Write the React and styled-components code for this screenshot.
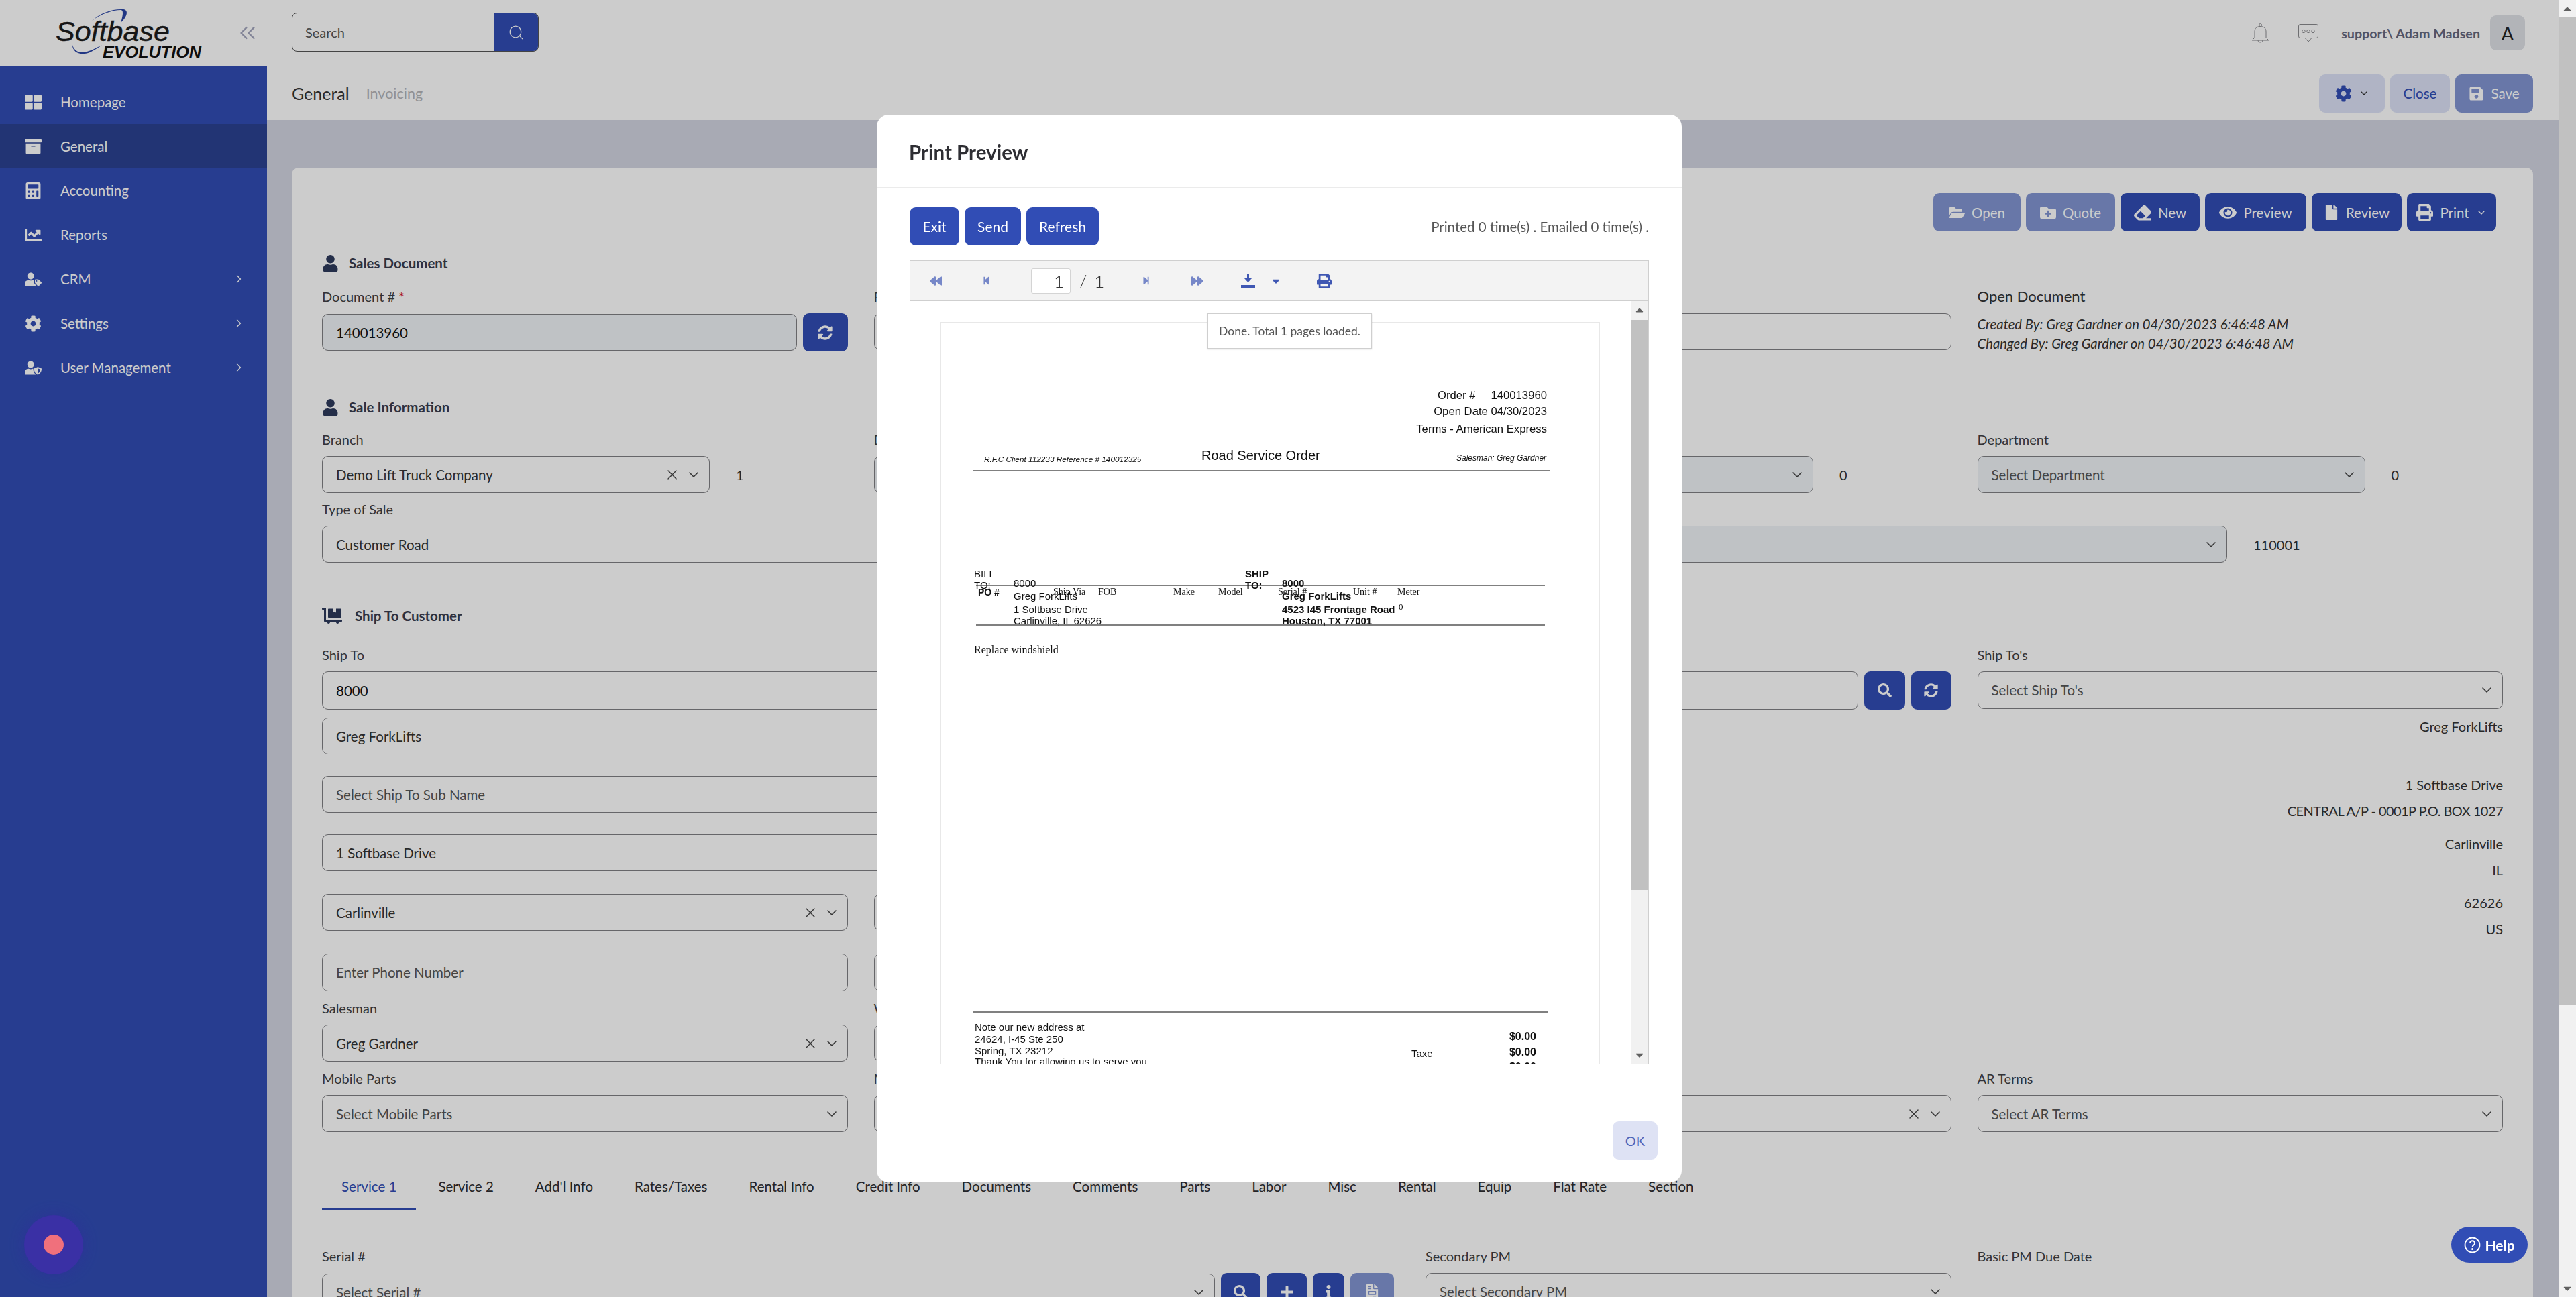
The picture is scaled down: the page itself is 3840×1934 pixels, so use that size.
import React from "react";
import styled, { createGlobalStyle } from "styled-components";
import { ChevronDown, ChevronRight, ChevronsLeft, Search, X } from "lucide-react";
import {
  FaArchive, FaBackward, FaCalculator, FaCaretDown, FaChartLine, FaCog, FaDollyFlatbed, FaEraser, FaEye, FaFile,
  FaFileInvoice, FaFolderOpen, FaFolderPlus, FaForward, FaInfo, FaPlus, FaPrint, FaSave, FaSearch, FaStepBackward,
  FaStepForward, FaSyncAlt, FaThLarge, FaUser, FaUserShield, FaUserTag, FaCaretUp,
} from "react-icons/fa";

const Global = createGlobalStyle`
  body {
    margin: 0;
    overflow: hidden;
    background: #d3d5e2;
    font-family: Lato, "Noto Sans", sans-serif;
    font-size: 20px;
    color: #2f2f33;
  }
`;

const Shell = styled.div`
  display: flex;
  height: 100vh;
  overflow: hidden;
`;

const Main = styled.div`
  flex: 1;
  display: flex;
  min-width: 0;
`;

const Sidebar = styled.aside`
  width: 398px;
  flex: none;
  background: #314db5;
`;

const LogoBar = styled.div`
  height: 98px;
  background: #fff;
  display: flex;
  align-items: center;
  justify-content: space-between;
  padding: 0 10px 0 78px;
`;

const NavList = styled.nav`
  padding-top: 21px;
`;

const NavItem = styled.div`
  height: 66px;
  display: flex;
  align-items: center;
  padding: 0 32px 0 37px;
  color: #fff;
  font-size: 20.5px;
  background: ${(p) => (p.$active ? "#2b4192" : "transparent")};
`;

const NavIcon = styled.span`
  width: 53px;
  display: flex;
  font-size: 25px;
`;

const NavCaret = styled.span`
  margin-left: auto;
  display: flex;
`;

const Content = styled.div`
  flex: 1;
  min-width: 0;
`;

const TopBar = styled.header`
  height: 98px;
  box-sizing: content-box;
  background: #fff;
  border-bottom: 1px solid #e6e6e6;
  display: flex;
  align-items: center;
  padding: 0 50px 0 37px;
`;

const SearchBox = styled.div`
  width: 368px;
  height: 58px;
  display: flex;
  border: 1px solid #555;
  border-radius: 8px;
  overflow: hidden;
  box-sizing: border-box;
  margin-top: -2px;
`;

const SearchText = styled.div`
  flex: 1;
  display: flex;
  align-items: center;
  padding-left: 19px;
  color: #555;
  font-size: 20px;
`;

const SearchButton = styled.div`
  width: 66px;
  background: #314db5;
  color: #fff;
  display: flex;
  align-items: center;
  justify-content: center;
`;

const TopRight = styled.div`
  margin-left: auto;
  display: flex;
  align-items: center;
  gap: 43px;
  color: #8a8a8e;
`;

const UserBlock = styled.div`
  display: flex;
  align-items: center;
  gap: 15px;
  margin-left: -9px;
`;

const UserName = styled.span`
  font-weight: 700;
  font-size: 19.7px;
  color: #65687f;
`;

const Avatar = styled.div`
  width: 52px;
  height: 52px;
  border-radius: 9px;
  background: #dfe1e6;
  display: flex;
  align-items: center;
  justify-content: center;
  font-size: 27px;
  color: #222;
`;

const SubBar = styled.div`
  height: 80px;
  background: #fff;
  display: flex;
  align-items: center;
  padding: 0 38px 0 37px;
`;

const Crumb = styled.span`
  font-size: 25px;
  color: #333;
`;

const CrumbDim = styled.span`
  font-size: 21.5px;
  color: #b4b4b8;
  margin-left: 25px;
`;

const SubActions = styled.div`
  margin-left: auto;
  display: flex;
  gap: 8px;
`;

const Btn = styled.button`
  height: 57px;
  width: ${(p) => p.$w}px;
  border: 0;
  padding: 0;
  border-radius: 9px;
  display: inline-flex;
  align-items: center;
  justify-content: center;
  gap: 10px;
  flex: none;
  font: inherit;
  font-size: 20.5px;
  color: ${(p) => (p.$soft ? "#314db5" : "#fff")};
  background: ${(p) => (p.$soft ? "#dce2f7" : p.$off ? "#8295d3" : "#314db5")};
`;

const Card = styled.main`
  margin: 71px 38px 0 37px;
  padding: 38px 45px 0;
  background: #fff;
  border-radius: 10px;
`;

const ActionBar = styled.div`
  display: flex;
  justify-content: flex-end;
  gap: 8px;
  padding-right: 10px;
`;

const SectionHead = styled.h3`
  margin: ${(p) => p.$top}px 0 0;
  height: 30px;
  display: flex;
  align-items: center;
  gap: ${(p) => p.$gap || 15}px;
  font-size: 20.5px;
  font-weight: 700;
  color: #3a3d4e;
  svg { color: #2d3a5c; font-size: 25px; }
`;

const Row = styled.div`
  display: grid;
  grid-template-columns: repeat(${(p) => p.$cols || 4}, minmax(0, 1fr));
  column-gap: 39px;
  margin-top: ${(p) => p.$top || 0}px;
`;

const Cell = styled.div`
  grid-column: span ${(p) => p.$span || 1};
  min-width: 0;
`;

const Label = styled.div`
  height: 28px;
  line-height: 28px;
  margin-bottom: 11px;
  font-size: 20px;
  color: #3f3f44;
  white-space: nowrap;
  b { color: #d3162c; font-weight: 400; }
`;

const Control = styled.div`
  display: flex;
  align-items: center;
  gap: ${(p) => p.$gap || 9}px;
`;

const Box = styled.div`
  height: ${(p) => p.$h || 55}px;
  box-sizing: border-box;
  flex: ${(p) => (p.$w ? "none" : 1)};
  width: ${(p) => (p.$w ? `${p.$w}px` : "auto")};
  min-width: 0;
  display: flex;
  align-items: center;
  padding: 0 11px 0 20px;
  border: 1px solid #808084;
  border-radius: 9px;
  background: ${(p) => (p.$off ? "#eff3f7" : "#fff")};
  color: ${(p) => (p.$dark ? "#111" : "#333")};
  font-size: 20.5px;
  white-space: nowrap;
`;

const Hint = styled.span`
  color: #555;
`;

const BoxIcons = styled.span`
  margin-left: auto;
  display: flex;
  align-items: center;
  gap: 8px;
  color: #444;
`;

const Code = styled.span`
  margin-left: ${(p) => (p.$flush ? 0 : 30)}px;
  font-size: 20px;
  color: #333;
`;

const SquareBtn = styled(Btn)`
  font-size: 21px;
`;

const DocInfo = styled.div`
  font-size: 20.3px;
  color: #333;
`;

const DocTitle = styled.div`
  font-size: 22px;
  height: 28px;
  line-height: 28px;
  margin-bottom: 13px;
`;

const DocLine = styled.div`
  font-style: italic;
  height: 29px;
  line-height: 29px;
`;

const ReadLine = styled.div`
  height: 26px;
  line-height: 26px;
  margin-top: ${(p) => p.$top || 0}px;
  text-align: right;
  font-size: 20px;
  letter-spacing: ${(p) => (p.$tight ? "-0.55px" : "0")};
  color: #333;
  white-space: nowrap;
`;

const Stack = styled.div`
  grid-column: span ${(p) => p.$span || 1};
  min-width: 0;
`;

const Tabs = styled.div`
  display: flex;
  gap: 4px;
  margin-top: 52px;
  height: 65px;
  box-sizing: border-box;
  border-bottom: 1px solid #d3d5e2;
`;

const Tab = styled.div`
  height: 65px;
  box-sizing: border-box;
  display: flex;
  align-items: center;
  padding: 0 29px 3px;
  font-size: 20.5px;
  white-space: nowrap;
  color: ${(p) => (p.$on ? "#314db5" : "#2c2c30")};
  border-bottom: 4px solid ${(p) => (p.$on ? "#314db5" : "transparent")};
`;

const PageScroll = styled.div`
  width: 26px;
  flex: none;
  background: #f1f1f1;
  display: flex;
  flex-direction: column;
`;

const ScrollEnd = styled.div`
  height: 26px;
  flex: none;
  display: flex;
  align-items: center;
  justify-content: center;
  color: #606060;
  font-size: 18px;
`;

const ScrollThumb = styled.div`
  height: ${(p) => p.$h}px;
  margin: ${(p) => p.$top || 0}px 0 auto;
  background: #c1c1c1;
`;

const Overlay = styled.div`
  position: fixed;
  inset: 0 26px 0 0;
  background: rgba(0, 0, 0, 0.2);
  display: flex;
  justify-content: center;
  align-items: flex-start;
  padding-top: 171px;
`;

const Modal = styled.section`
  width: 1200px;
  height: 1592px;
  background: #fff;
  border-radius: 18px;
  display: flex;
  flex-direction: column;
  overflow: hidden;
`;

const ModalHead = styled.div`
  height: 109px;
  box-sizing: border-box;
  flex: none;
  border-bottom: 1px solid #ebebeb;
  display: flex;
  align-items: center;
  padding: 3px 48px 0;
  font-size: 29.5px;
  font-weight: 700;
  color: #2e2e33;
`;

const ModalBody = styled.div`
  flex: 1;
  min-height: 0;
  padding: 29px 49px 0;
`;

const ModalActions = styled.div`
  display: flex;
  align-items: center;
  gap: 8px;
  height: 57px;
  margin-bottom: 22px;
`;

const ModalBtn = styled(Btn)`
  font-size: 21px;
`;

const PrintCount = styled.span`
  margin-left: auto;
  font-size: 20.5px;
  color: #555;
`;

const Viewer = styled.div`
  height: 1199px;
  box-sizing: border-box;
  border: 1px solid #cfcfcf;
  display: flex;
  flex-direction: column;
`;

const ViewerBar = styled.div`
  height: 60px;
  flex: none;
  box-sizing: border-box;
  background: #f3f3f3;
  border-bottom: 1px solid #cfcfcf;
  display: flex;
  align-items: center;
  padding-left: 29px;
  color: #333;
`;

const ToolIcon = styled.span`
  display: flex;
  margin-left: ${(p) => p.$ml || 0}px;
  font-size: ${(p) => p.$s || 18}px;
  color: ${(p) => (p.$dim ? "#7687c8" : "#3f57b3")};
`;

const PageInput = styled.div`
  width: 59px;
  height: 38px;
  box-sizing: border-box;
  margin-left: 60px;
  padding-right: 9px;
  background: #fff;
  border: 1px solid #d4d4d4;
  border-radius: 3px;
  display: flex;
  align-items: center;
  justify-content: flex-end;
  font-size: 26px;
  font-weight: 300;
`;

const PageTotal = styled.span`
  margin-left: 13px;
  font-size: 26px;
  font-weight: 300;
  word-spacing: 4px;
`;

const ViewerBody = styled.div`
  flex: 1;
  min-height: 0;
  display: flex;
  position: relative;
`;

const ReportArea = styled.div`
  flex: 1;
  overflow: hidden;
  padding: 31px 0 0 44px;
`;

const ViewerScroll = styled.div`
  width: 24px;
  margin-right: 1px;
  background: #f1f1f1;
  display: flex;
  flex-direction: column;
  justify-content: space-between;
`;

const Toast = styled.div`
  position: absolute;
  left: 443px;
  top: 18px;
  width: 245px;
  height: 53px;
  box-sizing: border-box;
  background: #fff;
  border: 1px solid #cfcfcf;
  box-shadow: 0 1px 2px rgba(0, 0, 0, 0.15);
  display: flex;
  align-items: center;
  justify-content: center;
  font-size: 17.5px;
  color: #555;
  white-space: nowrap;
`;

const ReportPage = styled.div`
  width: 984px;
  height: 1400px;
  box-sizing: border-box;
  border: 1px solid #e8e8e8;
  position: relative;
`;

const RText = styled.span`
  position: absolute;
  ${(p) => (p.$right !== undefined ? `right: ${p.$right}px;` : `left: ${p.$x}px;`)}
  top: ${(p) => p.$y}px;
  transform: translateY(-50%);
  white-space: nowrap;
  color: #111;
  font-family: ${(p) => (p.$serif ? '"Liberation Serif", serif' : '"Liberation Sans", Arial, sans-serif')};
  font-size: ${(p) => p.$s || 15}px;
  font-weight: ${(p) => (p.$b ? 700 : 400)};
  font-style: ${(p) => (p.$i ? "italic" : "normal")};
`;

const RLine = styled.div`
  position: absolute;
  left: ${(p) => p.$x}px;
  top: ${(p) => p.$y}px;
  width: ${(p) => p.$w}px;
  height: ${(p) => p.$t || 2}px;
  background: #808080;
`;

const ModalFoot = styled.div`
  height: 126px;
  flex: none;
  box-sizing: border-box;
  border-top: 1px solid #ebebeb;
  display: flex;
  justify-content: flex-end;
  padding: 34px 36px 0 0;
`;

const OkBtn = styled(Btn)`
  color: #4f63b8;
  background: #dee2f4;
  font-size: 20px;
`;

const HelpBtn = styled.div`
  position: fixed;
  left: 3654px;
  top: 1829px;
  width: 114px;
  height: 54px;
  border-radius: 27px;
  background: #314db5;
  color: #fff;
  display: flex;
  align-items: center;
  justify-content: center;
  gap: 6px;
  font-weight: 700;
  font-size: 21px;
`;

const Recorder = styled.div`
  position: fixed;
  left: 36px;
  top: 1812px;
  width: 88px;
  height: 88px;
  border-radius: 50%;
  background: #3a30a5;
  box-shadow: 0 0 24px rgba(50, 40, 160, 0.5);
  display: flex;
  align-items: center;
  justify-content: center;
  &::after {
    content: "";
    width: 30px;
    height: 30px;
    border-radius: 50%;
    background: #f0707c;
  }
`;

const Logo = () => (
  <svg width="224" height="80" viewBox="0 0 224 80">
    <path d="M59 22C72 12 90 6 102 6C106 6 106 12 102 25C112 16 114 6 106 5C90 4 72 10 59 22Z" fill="#2a45a5" />
    <path d="M30 58C30 70 44 75 58 68C64 65 70 61 74 58C64 63 54 69 44 69C36 69 32 64 30 58Z" fill="#2a45a5" />
    <text x="5" y="52" fontFamily="Liberation Sans" fontStyle="italic" fontSize="41" textLength="170" lengthAdjust="spacingAndGlyphs" fill="#1c1c1c" stroke="#1c1c1c" strokeWidth=".4">Softbase</text>
    <text x="75" y="77" fontFamily="Liberation Sans" fontStyle="italic" fontWeight="700" fontSize="24" textLength="147" lengthAdjust="spacingAndGlyphs" fill="#111">EVOLUTION</text>
  </svg>
);

const BellIcon = () => (
  <svg width="27" height="29" viewBox="0 0 27 29" fill="none" stroke="currentColor" strokeWidth="1">
    <circle cx="13.500" cy="2.500" r="2" />
    <path d="M5 21V12C5 7 8.500 4.500 13.500 4.500S22 7 22 12V21L26 25H1Z" />
    <path d="M10 25c0 4 7 4 7 0" />
  </svg>
);

const ChatIcon = () => (
  <svg width="30" height="27" viewBox="0 0 30 27" fill="none" stroke="currentColor" strokeWidth="1">
    <path d="M3 .5H27A2.500 2.500 0 0 1 29.500 3V18A2.500 2.500 0 0 1 27 20.500H20L15 26L10 20.500H3A2.500 2.500 0 0 1 .5 18V3A2.500 2.500 0 0 1 3 .5Z" />
    <circle cx="8" cy="10.500" r="2.200" />
    <circle cx="15" cy="10.500" r="2.200" />
    <circle cx="22" cy="10.500" r="2.200" />
  </svg>
);

const Chev = () => <ChevronDown size={24} strokeWidth={1.6} />;
const Clear = () => <X size={24} strokeWidth={1.4} />;

const Select = ({ value, hint, clear, w, off, h }) => (
  <Box $w={w} $off={off} $h={h}>
    {value ? value : <Hint>{hint}</Hint>}
    <BoxIcons>
      {clear && <Clear />}
      <Chev />
    </BoxIcons>
  </Box>
);

const navItems = [
  ["Homepage", FaThLarge],
  ["General", FaArchive, true],
  ["Accounting", FaCalculator],
  ["Reports", FaChartLine],
  ["CRM", FaUserTag, false, true],
  ["Settings", FaCog, false, true],
  ["User Management", FaUserShield, false, true],
];

const tabs = ["Service 1", "Service 2", "Add'l Info", "Rates/Taxes", "Rental Info", "Credit Info", "Documents", "Comments", "Parts", "Labor", "Misc", "Rental", "Equip", "Flat Rate", "Section"];

const report = [
  { x: 741, y: 109, s: 16.7, t: "Order #" },
  { right: 78, y: 109, s: 16.7, t: "140013960" },
  { right: 78, y: 133, s: 16.7, t: "Open Date 04/30/2023" },
  { right: 78, y: 159, s: 16.7, t: "Terms - American Express" },
  { x: 65, y: 204, s: 11.8, i: true, t: "R.F.C Client 112233  Reference # 140012325" },
  { x: 389, y: 198, s: 20, t: "Road Service Order" },
  { x: 769, y: 202, s: 12, i: true, t: "Salesman: Greg Gardner" },
  { x: 50, y: 374, t: "BILL" },
  { x: 50, y: 391, t: "TO:" },
  { x: 109, y: 388, t: "8000" },
  { x: 109, y: 407, t: "Greg ForkLifts" },
  { x: 109, y: 427, t: "1 Softbase Drive" },
  { x: 109, y: 444, t: "Carlinville, IL 62626" },
  { x: 454, y: 374, b: true, t: "SHIP" },
  { x: 454, y: 391, b: true, t: "TO:" },
  { x: 509, y: 388, b: true, t: "8000" },
  { x: 509, y: 407, b: true, t: "Greg ForkLifts" },
  { x: 509, y: 427, b: true, t: "4523 I45 Frontage Road" },
  { x: 509, y: 444, b: true, t: "Houston, TX 77001" },
  { x: 56, y: 402, s: 14, b: true, t: "PO #" },
  { x: 168, y: 402, s: 14, serif: true, t: "Ship Via" },
  { x: 235, y: 402, s: 14, serif: true, t: "FOB" },
  { x: 347, y: 402, s: 14, serif: true, t: "Make" },
  { x: 414, y: 402, s: 14, serif: true, t: "Model" },
  { x: 503, y: 402, s: 14, serif: true, t: "Serial #" },
  { x: 615, y: 402, s: 14, serif: true, t: "Unit #" },
  { x: 681, y: 402, s: 14, serif: true, t: "Meter" },
  { x: 683, y: 424, s: 13, serif: true, t: "0" },
  { x: 50, y: 488, s: 16, serif: true, t: "Replace windshield" },
  { x: 51, y: 1050, t: "Note our new address at" },
  { x: 51, y: 1068, t: "24624, I-45 Ste 250" },
  { x: 51, y: 1085, t: "Spring, TX 23212" },
  { x: 51, y: 1101, t: "Thank You for allowing us to serve you." },
  { x: 702, y: 1089, t: "Taxe" },
  { right: 94, y: 1065, b: true, s: 16, t: "$0.00" },
  { right: 94, y: 1088, b: true, s: 16, t: "$0.00" },
  { right: 94, y: 1110, b: true, s: 16, t: "$0.00" },
];

const DownloadIcon = () => (
  <svg width="21" height="21" viewBox="0 0 21 21" fill="currentColor">
    <rect x="9" y="0" width="3" height="7" />
    <path d="M4.5 6.5h12L10.500 13Z" />
    <rect x="0" y="17" width="21" height="4" />
  </svg>
);

const HelpIcon = () => (
  <svg width="25" height="25" viewBox="0 0 25 25" fill="none" stroke="currentColor" strokeWidth="1.8">
    <circle cx="12.500" cy="12.500" r="11" />
    <path d="M9 10c0-5 7-5 7 0 0 2.500-3.500 3-3.500 5.500" />
    <circle cx="12.500" cy="18.500" r=".6" />
  </svg>
);

export default function App() {
  return (
    <Shell>
      <Global />
      <Main>
        <Sidebar>
          <LogoBar>
            <Logo />
            <ChevronsLeft size={38} strokeWidth={1.5} color="#a3a6bd" />
          </LogoBar>
          <NavList>
            {navItems.map(([name, Icon, active, more]) => (
              <NavItem key={name} $active={active}>
                <NavIcon><Icon /></NavIcon>
                {name}
                {more && <NavCaret><ChevronRight size={20} strokeWidth={1.6} /></NavCaret>}
              </NavItem>
            ))}
          </NavList>
        </Sidebar>
        <Content>
          <TopBar>
            <SearchBox>
              <SearchText>Search</SearchText>
              <SearchButton><Search size={25} strokeWidth={1.2} /></SearchButton>
            </SearchBox>
            <TopRight>
              <BellIcon />
              <ChatIcon />
              <UserBlock>
                <UserName>support\ Adam Madsen</UserName>
                <Avatar>A</Avatar>
              </UserBlock>
            </TopRight>
          </TopBar>
          <SubBar>
            <Crumb>General</Crumb>
            <CrumbDim>Invoicing</CrumbDim>
            <SubActions>
              <Btn $w={98} $soft><FaCog size={25} /><ChevronDown size={16} color="#333" /></Btn>
              <Btn $w={89} $soft>Close</Btn>
              <Btn $w={116} $off><FaSave size={23} />Save</Btn>
            </SubActions>
          </SubBar>
          <Card>
            <ActionBar>
              <Btn $w={130} $off><FaFolderOpen size={24} />Open</Btn>
              <Btn $w={133} $off><FaFolderPlus size={24} />Quote</Btn>
              <Btn $w={118}><FaEraser size={26} />New</Btn>
              <Btn $w={151}><FaEye size={26} />Preview</Btn>
              <Btn $w={134}><FaFile size={23} />Review</Btn>
              <Btn $w={133}><FaPrint size={25} />Print<ChevronDown size={16} /></Btn>
            </ActionBar>

            <SectionHead $top={32}><FaUser />Sales Document</SectionHead>
            <Row $top={21}>
              <Cell>
                <Label>Document # <b>*</b></Label>
                <Control>
                  <Box $off $dark>140013960</Box>
                  <SquareBtn $w={67}><FaSyncAlt size={22} /></SquareBtn>
                </Control>
              </Cell>
              <Cell>
                <Label>PO #</Label>
                <Box />
              </Cell>
              <Cell>
                <Label>Reference</Label>
                <Box />
              </Cell>
              <Cell>
                <DocInfo>
                  <DocTitle>Open Document</DocTitle>
                  <DocLine>Created By: Greg Gardner on 04/30/2023 6:46:48 AM</DocLine>
                  <DocLine>Changed By: Greg Gardner on 04/30/2023 6:46:48 AM</DocLine>
                </DocInfo>
              </Cell>
            </Row>

            <SectionHead $top={65}><FaUser />Sale Information</SectionHead>
            <Row $top={19}>
              <Cell>
                <Label>Branch</Label>
                <Control><Select value="Demo Lift Truck Company" clear w={578} /><Code>1</Code></Control>
              </Cell>
              <Cell>
                <Label>Division</Label>
                <Control><Select w={578} off /><Code>0</Code></Control>
              </Cell>
              <Cell>
                <Label>Location</Label>
                <Control><Select w={578} off /><Code>0</Code></Control>
              </Cell>
              <Cell>
                <Label>Department</Label>
                <Control><Select hint="Select Department" w={578} off /><Code>0</Code></Control>
              </Cell>
            </Row>
            <Row $top={10}>
              <Cell $span={4}>
                <Label>Type of Sale</Label>
                <Control $gap={39}>
                  <Box $w={1400}>Customer Road</Box>
                  <Select w={1401} off />
                  <Code $flush>110001</Code>
                </Control>
              </Cell>
            </Row>

            <SectionHead $top={64} $gap={19}><FaDollyFlatbed size={30} />Ship To Customer</SectionHead>
            <Row $top={29}>
              <Cell $span={3}>
                <Label>Ship To</Label>
                <Control>
                  <Box $h={57} $dark>8000</Box>
                  <SquareBtn $w={61}><FaSearch size={21} /></SquareBtn>
                  <SquareBtn $w={60}><FaSyncAlt size={21} /></SquareBtn>
                </Control>
              </Cell>
              <Cell>
                <Label>Ship To's</Label>
                <Select hint="Select Ship To's" h={56} />
              </Cell>
            </Row>
            <Row $top={12}>
              <Stack $span={3}>
                <Row $cols={3}>
                  <Cell $span={2}><Box>Greg ForkLifts</Box></Cell>
                </Row>
                <Row $cols={3} $top={32}>
                  <Cell $span={2}><Box><Hint>Select Ship To Sub Name</Hint></Box></Cell>
                </Row>
                <Row $cols={3} $top={32}>
                  <Cell $span={2}><Box>1 Softbase Drive</Box></Cell>
                </Row>
                <Row $cols={3} $top={34}>
                  <Cell><Select value="Carlinville" clear /></Cell>
                  <Cell><Select /></Cell>
                </Row>
                <Row $cols={3} $top={34}>
                  <Cell><Box $h={56}><Hint>Enter Phone Number</Hint></Box></Cell>
                  <Cell><Box $h={56} /></Cell>
                </Row>
                <Row $cols={3} $top={11}>
                  <Cell>
                    <Label>Salesman</Label>
                    <Select value="Greg Gardner" clear />
                  </Cell>
                  <Cell>
                    <Label>Warehouse</Label>
                    <Select />
                  </Cell>
                </Row>
              </Stack>
              <Stack>
                <ReadLine>Greg ForkLifts</ReadLine>
                <ReadLine $top={61}>1 Softbase Drive</ReadLine>
                <ReadLine $top={13} $tight>CENTRAL A/P - 0001P P.O. BOX 1027</ReadLine>
                <ReadLine $top={23}>Carlinville</ReadLine>
                <ReadLine $top={13}>IL</ReadLine>
                <ReadLine $top={23}>62626</ReadLine>
                <ReadLine $top={13}>US</ReadLine>
              </Stack>
            </Row>
            <Row $top={11}>
              <Cell>
                <Label>Mobile Parts</Label>
                <Select hint="Select Mobile Parts" />
              </Cell>
              <Cell>
                <Label>Mechanic</Label>
                <Select />
              </Cell>
              <Cell>
                <Label>Terms</Label>
                <Select clear />
              </Cell>
              <Cell>
                <Label>AR Terms</Label>
                <Select hint="Select AR Terms" />
              </Cell>
            </Row>

            <Tabs>
              {tabs.map((t, i) => (
                <Tab key={t} $on={i === 0}>{t}</Tab>
              ))}
            </Tabs>

            <Row $top={54}>
              <Cell $span={2}>
                <Label>Serial #</Label>
                <Control>
                  <Box $w={1331}>
                    <Hint>Select Serial #</Hint>
                    <BoxIcons><Chev /></BoxIcons>
                  </Box>
                  <SquareBtn $w={59}><FaSearch size={21} /></SquareBtn>
                  <SquareBtn $w={60}><FaPlus size={21} /></SquareBtn>
                  <SquareBtn $w={47}><FaInfo size={21} /></SquareBtn>
                  <SquareBtn $w={65} $off><FaFileInvoice size={23} /></SquareBtn>
                </Control>
              </Cell>
              <Cell>
                <Label>Secondary PM</Label>
                <Select hint="Select Secondary PM" />
              </Cell>
              <Cell>
                <Label>Basic PM Due Date</Label>
              </Cell>
            </Row>
          </Card>
        </Content>
      </Main>
      <PageScroll>
        <ScrollEnd><FaCaretUp /></ScrollEnd>
        <ScrollThumb $h={1472} />
        <ScrollEnd><FaCaretDown /></ScrollEnd>
      </PageScroll>
      <Overlay>
        <Modal>
          <ModalHead>Print Preview</ModalHead>
          <ModalBody>
            <ModalActions>
              <ModalBtn $w={74}>Exit</ModalBtn>
              <ModalBtn $w={84}>Send</ModalBtn>
              <ModalBtn $w={108}>Refresh</ModalBtn>
              <PrintCount>Printed 0 time(s) . Emailed 0 time(s) .</PrintCount>
            </ModalActions>
            <Viewer>
              <ViewerBar>
                <ToolIcon $dim><FaBackward /></ToolIcon>
                <ToolIcon $dim $ml={60} $s={13}><FaStepBackward /></ToolIcon>
                <PageInput>1</PageInput>
                <PageTotal>/ 1</PageTotal>
                <ToolIcon $dim $ml={56} $s={13}><FaStepForward /></ToolIcon>
                <ToolIcon $dim $ml={61}><FaForward /></ToolIcon>
                <ToolIcon $ml={56}><DownloadIcon /></ToolIcon>
                <ToolIcon $ml={22}><FaCaretDown /></ToolIcon>
                <ToolIcon $ml={52} $s={22}><FaPrint /></ToolIcon>
              </ViewerBar>
              <ViewerBody>
                <ReportArea>
                  <ReportPage>
                    <RLine $x={48} $y={220} $w={861} />
                    <RLine $x={53} $y={391} $w={848} />
                    <RLine $x={53} $y={450} $w={848} />
                    <RLine $x={49} $y={1026} $w={857} $t={3} />
                    {report.map((r) => (
                      <RText key={r.t + r.y + (r.x || 0)} $x={r.x} $right={r.right} $y={r.y} $s={r.s} $b={r.b} $i={r.i} $serif={r.serif}>{r.t}</RText>
                    ))}
                  </ReportPage>
                </ReportArea>
                <ViewerScroll>
                  <ScrollEnd><FaCaretUp /></ScrollEnd>
                  <ScrollThumb $h={850} $top={2} />
                  <ScrollEnd><FaCaretDown /></ScrollEnd>
                </ViewerScroll>
                <Toast>Done. Total 1 pages loaded.</Toast>
              </ViewerBody>
            </Viewer>
          </ModalBody>
          <ModalFoot><OkBtn $w={67}>OK</OkBtn></ModalFoot>
        </Modal>
      </Overlay>
      <Recorder />
      <HelpBtn><HelpIcon />Help</HelpBtn>
    </Shell>
  );
}
